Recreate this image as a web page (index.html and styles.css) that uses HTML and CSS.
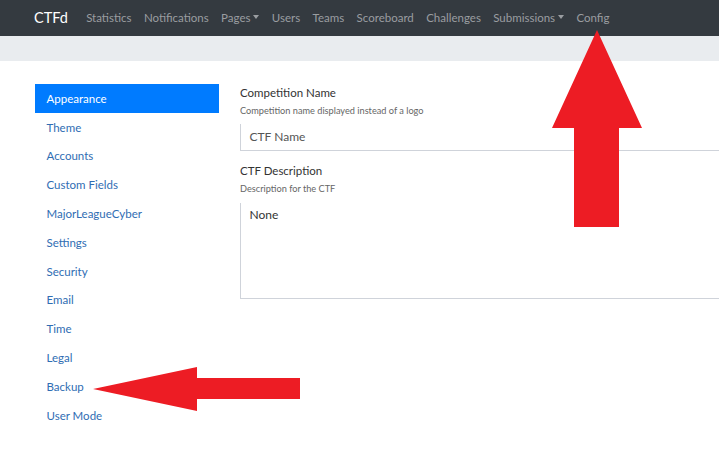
FILE: index.html
```html
<!DOCTYPE html>
<html>
<head>
<meta charset="utf-8">
<link rel="stylesheet" href="styles.css">
</head>
<body>
<nav class="navbar">
  <span class="brand">CTFd</span>
  <ul class="nav-links">
    <li>Statistics</li>
    <li>Notifications</li>
    <li class="dropdown">Pages<span class="caret"></span></li>
    <li>Users</li>
    <li>Teams</li>
    <li>Scoreboard</li>
    <li>Challenges</li>
    <li class="dropdown">Submissions<span class="caret"></span></li>
    <li>Config</li>
  </ul>
</nav>
<div class="jumbotron"></div>
<main class="page">
  <ul class="sidebar">
    <li class="active">Appearance</li>
    <li>Theme</li>
    <li>Accounts</li>
    <li>Custom Fields</li>
    <li>MajorLeagueCyber</li>
    <li>Settings</li>
    <li>Security</li>
    <li>Email</li>
    <li>Time</li>
    <li>Legal</li>
    <li>Backup</li>
    <li>User Mode</li>
  </ul>
  <section class="content">
    <div class="form-group">
      <label>Competition Name</label>
      <small>Competition name displayed instead of a logo</small>
      <div class="input">CTF Name</div>
    </div>
    <div class="form-group">
      <label>CTF Description</label>
      <small>Description for the CTF</small>
      <div class="textarea">None</div>
    </div>
  </section>
</main>
<svg class="arrow arrow-up" width="92" height="200" viewBox="0 0 92 200">
  <polygon points="45,0 90,98 67,98 67,197 22,197 22,98 0,98" fill="#ed1c24"/>
</svg>
<svg class="arrow arrow-left" width="210" height="46" viewBox="0 0 210 46">
  <polygon points="0,22 104,0 104,11 207,11 207,32 104,32 104,44" fill="#ed1c24"/>
</svg>
</body>
</html>
```
FILE: styles.css
```css
* { box-sizing: border-box; }
html, body { margin: 0; padding: 0; }
body {
  font-family: Lato, "Open Sans", "Liberation Sans", sans-serif;
  font-size: 11.5px;
  background: #fff;
  color: #333;
  width: 719px;
  height: 460px;
  overflow: hidden;
  position: relative;
}
.navbar {
  height: 36px;
  background: #343a40;
  display: flex;
  align-items: center;
  padding-left: 34px;
  padding-bottom: 2px;
}
.brand {
  color: #fff;
  font-size: 14.5px;
  margin-right: 12px;
}
.nav-links {
  list-style: none;
  margin: 0;
  padding: 0;
  display: flex;
}
.nav-links li {
  color: #9a9da1;
  padding: 0 6.2px;
  font-size: 11.5px;
  display: flex;
  align-items: center;
}
.caret {
  display: inline-block;
  width: 0;
  height: 0;
  border-left: 3.5px solid transparent;
  border-right: 3.5px solid transparent;
  border-top: 4px solid #9a9da1;
  margin-left: 3px;
}
.jumbotron {
  height: 25px;
  background: #e9ecef;
}
.page {
  display: flex;
  padding: 23px 0 0 35px;
  overflow: hidden;
}
.sidebar {
  list-style: none;
  margin: 0;
  padding: 0;
  width: 184px;
  flex: none;
}
.sidebar li {
  height: 28.8px;
  line-height: 17.3px;
  padding: 5.75px 11.5px;
  color: #2f6db3;
}
.sidebar li.active {
  background: #007bff;
  color: #fff;
}
.content {
  margin-left: 21px;
  flex: none;
  width: 480px;
}
.form-group {
  display: flex;
  flex-direction: column;
  margin-bottom: 11px;
}
.form-group label {
  line-height: 17px;
  color: #333;
  margin-bottom: 3px;
}
.form-group small {
  font-size: 9.2px;
  line-height: 14px;
  color: #666;
  margin-bottom: 6px;
}
.input {
  height: 27px;
  border-left: 1.5px solid #cfd3da;
  border-bottom: 1.5px solid #cfd3da;
  padding-left: 8.5px;
  line-height: 25px;
  color: #555;
  font-size: 12px;
}
.textarea {
  height: 96px;
  margin-top: 1px;
  border-left: 1.5px solid #cfd3da;
  border-bottom: 1.5px solid #cfd3da;
  padding: 3px 8.5px;
  line-height: 17px;
  color: #333;
  font-size: 12px;
}
.arrow {
  position: absolute;
}
.arrow-up {
  left: 552px;
  top: 30px;
}
.arrow-left {
  left: 93px;
  top: 367px;
}
```
